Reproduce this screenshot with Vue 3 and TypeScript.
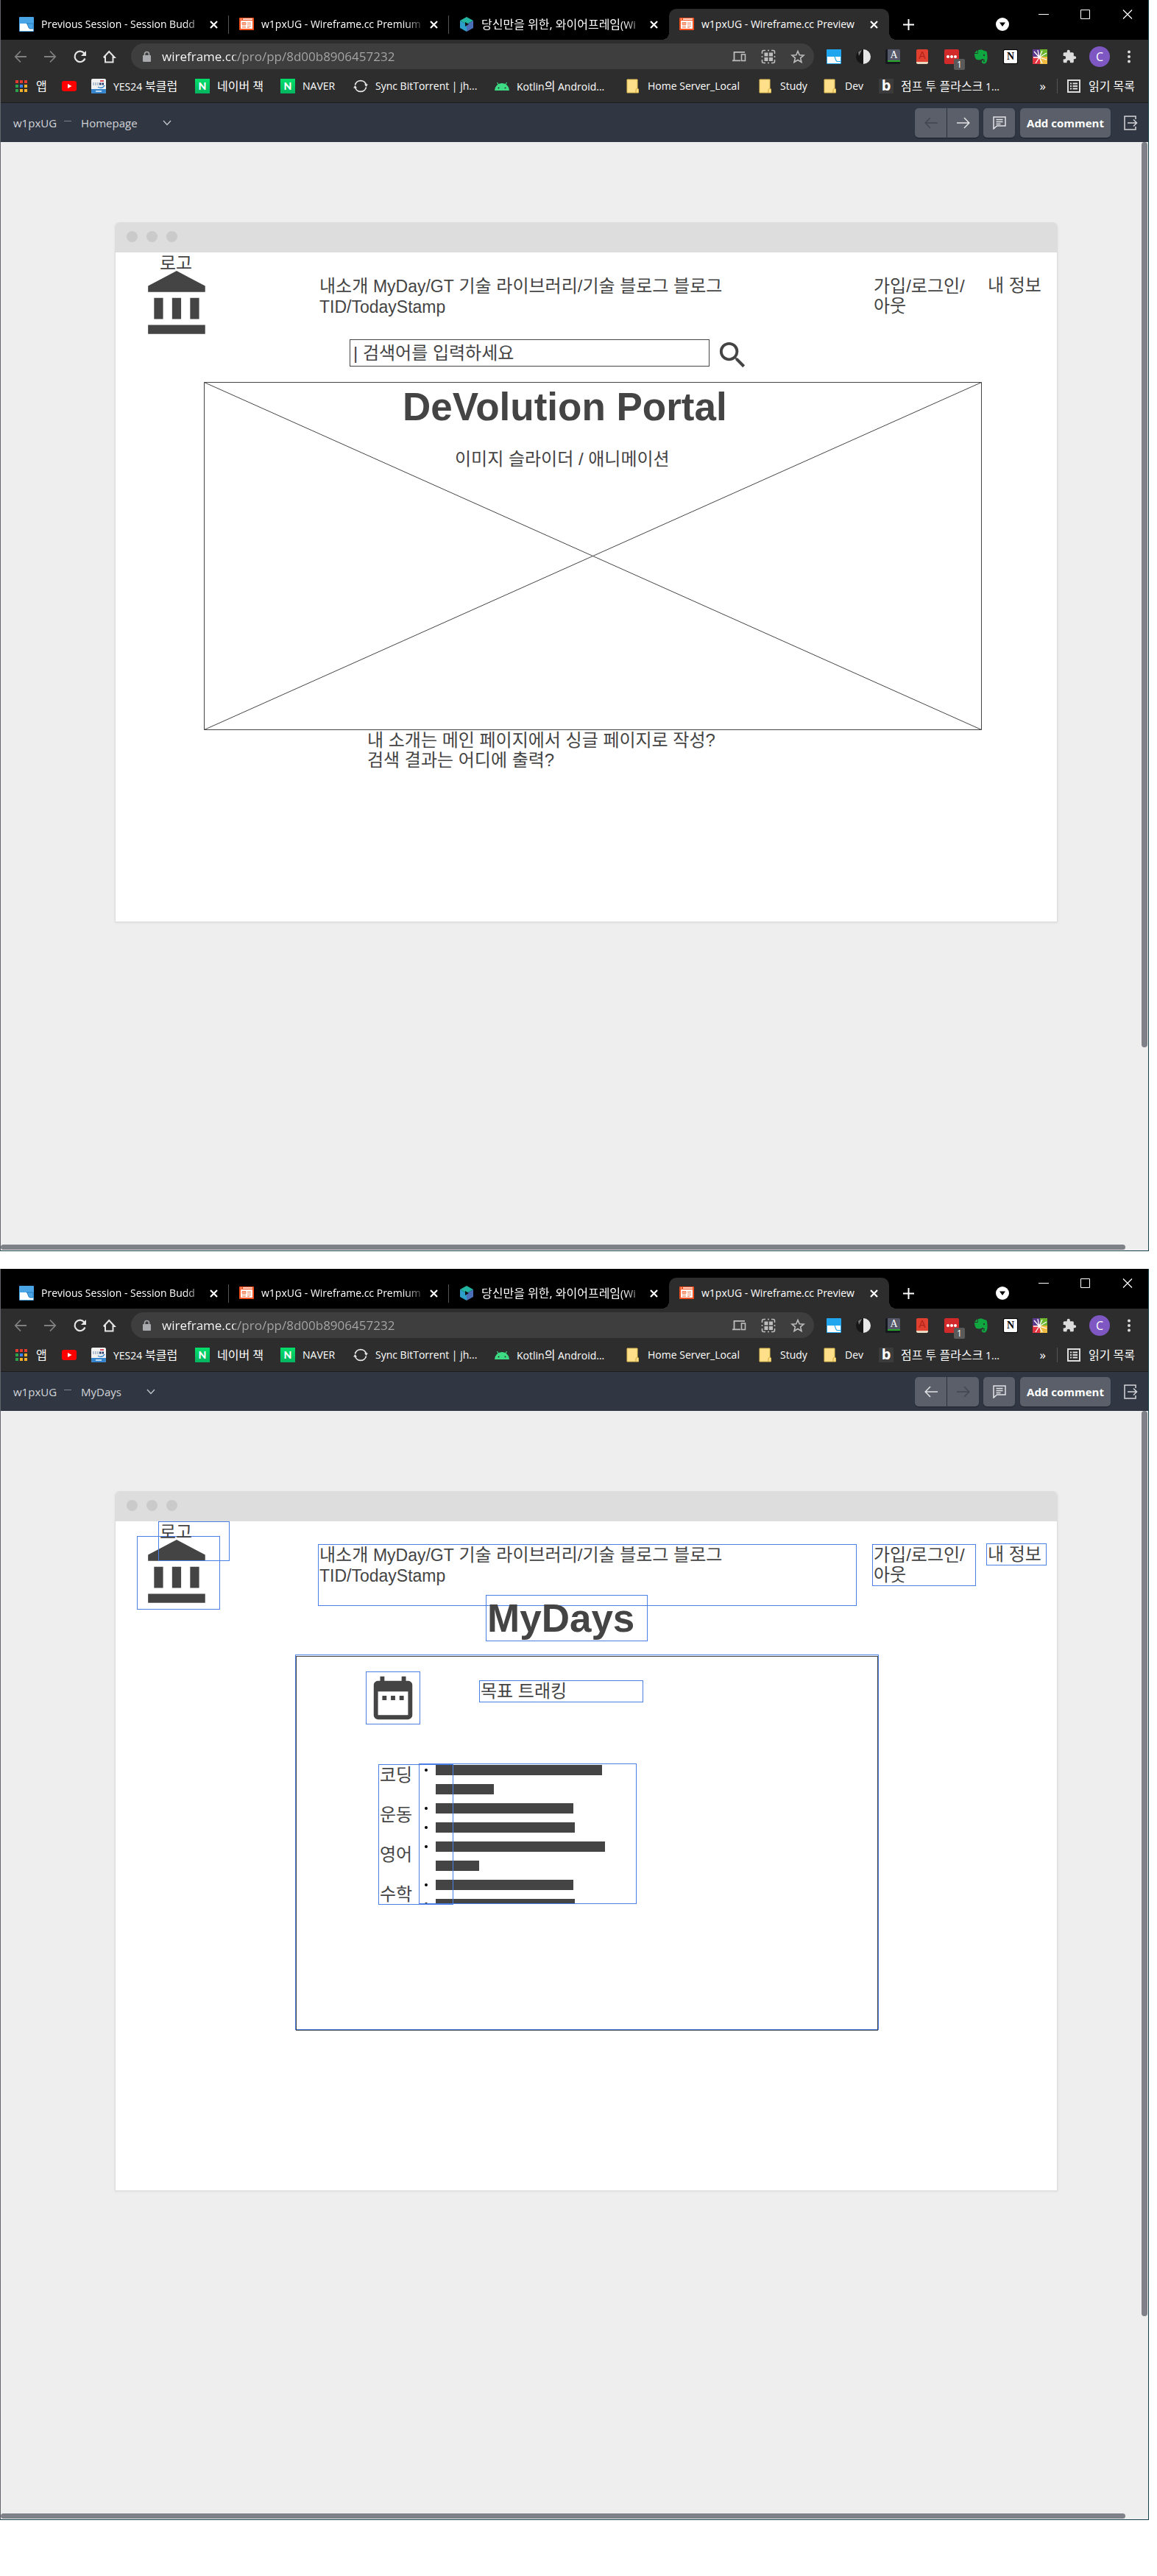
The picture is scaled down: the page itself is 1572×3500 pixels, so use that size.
<script setup lang="ts">
interface BrowserWindow {
  id: string
  page: string
  canGoBack: boolean
  canGoForward: boolean
  selected: boolean
}

interface Tab {
  icon: 'session' | 'wireframe' | 'hexagon'
  title: string
  active?: boolean
}

interface Bookmark {
  icon: 'apps' | 'youtube' | 'yes24' | 'naver' | 'sync' | 'android' | 'folder' | 'blog'
  label: string
}

interface Run {
  text: string
  hangul: boolean
}

const windows: BrowserWindow[] = [
  { id: 'home', page: 'Homepage', canGoBack: false, canGoForward: true, selected: false },
  { id: 'mydays', page: 'MyDays', canGoBack: true, canGoForward: false, selected: true },
]

const tabs: Tab[] = [
  { icon: 'session', title: 'Previous Session - Session Budd' },
  { icon: 'wireframe', title: 'w1pxUG - Wireframe.cc Premium' },
  { icon: 'hexagon', title: '당신만을 위한, 와이어프레임(Wi' },
  { icon: 'wireframe', title: 'w1pxUG - Wireframe.cc Preview', active: true },
]

const bookmarks: Bookmark[] = [
  { icon: 'apps', label: '앱' },
  { icon: 'youtube', label: '' },
  { icon: 'yes24', label: 'YES24 북클럽' },
  { icon: 'naver', label: '네이버 책' },
  { icon: 'naver', label: 'NAVER' },
  { icon: 'sync', label: 'Sync BitTorrent | jh...' },
  { icon: 'android', label: 'Kotlin의 Android...' },
  { icon: 'folder', label: 'Home Server_Local' },
  { icon: 'folder', label: 'Study' },
  { icon: 'folder', label: 'Dev' },
  { icon: 'blog', label: '점프 투 플라스크 1...' },
]

const appColors = ['#e33b2e', '#e33b2e', '#e33b2e', '#2ba24c', '#3b82f0', '#f4b02a', '#2ba24c', '#f4b02a', '#f4b02a']

const goals: number[][] = [[226, 79], [187], [189], [230, 59], [187], [189]]

// Hangul is set one step larger than Latin, so labels are split by script.
function runs(text: string): Run[] {
  const parts = text.match(/[가-힣]+(?:[ ,]+[가-힣]+)*|[^가-힣]+/g) ?? []
  return parts.map((part) => ({ text: part, hangul: /[가-힣]/.test(part) }))
}
</script>

<template>
  <main class="page">
    <section v-for="win in windows" :key="win.id" class="window">
      <header class="tabstrip">
        <div v-for="(tab, i) in tabs" :key="i" class="tab" :class="{ active: tab.active, divided: i < 2 }">
          <svg v-if="tab.icon === 'session'" class="fav" viewBox="0 0 20 20">
            <rect width="20" height="20" rx="1" fill="#4aa5e6" />
            <path d="M1 9h9c2 0 2 7 5 7h4v3H1z" fill="#fff" />
            <path d="M10 9h9v7h-4c-3 0-3-7-5-7z" fill="#4aa5e6" stroke="#2a7fc0" stroke-width="1" />
          </svg>
          <svg v-else-if="tab.icon === 'wireframe'" class="fav" viewBox="0 0 20 20">
            <rect y="1" width="20" height="17" rx="1" fill="#f4511e" />
            <path d="M2 3h1M5 3h13" stroke="#fff" stroke-width="1.4" />
            <rect x="2" y="5" width="16" height="11" fill="#fff" />
            <path d="M4 7.500h5v3H4zM11 8h5M11 10h5M4 12.500h5M4 14.500h5M11 12.500h5M11 14.500h3" fill="#f9a88c" stroke="#f58a66" />
          </svg>
          <svg v-else class="fav" viewBox="0 0 20 20">
            <path d="M10 0l9 5-9 5-9-5z" fill="#23b5a0" />
            <path d="M1 5l9 5v10l-9-5z" fill="#2d9fc9" />
            <path d="M19 5l-9 5v10l9-5z" fill="#4a6fb8" />
            <path d="M8 7l5 3-5 3z" fill="#111" />
          </svg>
          <span class="tab-title"><span v-for="(run, r) in runs(tab.title)" :key="r" :class="{ hangul: run.hangul }">{{ run.text }}</span></span>
          <button class="plain" type="button" aria-label="탭 닫기">
            <svg class="x" viewBox="0 0 11 11"><path d="M1 1l9 9M10 1l-9 9" stroke="#fff" stroke-width="2.200" /></svg>
          </button>
        </div>
        <button class="plain new-tab" type="button" aria-label="새 탭">
          <svg viewBox="0 0 15 15" width="15" height="15"><path d="M7.500 0v15M0 7.500h15" stroke="#fff" stroke-width="2" /></svg>
        </button>
        <button class="plain tab-search" type="button" aria-label="탭 검색">
          <svg viewBox="0 0 18 18" width="18" height="18"><circle cx="9" cy="9" r="9" fill="#fff" /><path d="M5 6.500h8L9 12z" fill="#000" /></svg>
        </button>
        <div class="controls">
          <button class="plain" type="button" aria-label="최소화"><svg viewBox="0 0 14 14"><path d="M0 7.500h14" stroke="#fff" /></svg></button>
          <button class="plain" type="button" aria-label="최대화"><svg viewBox="0 0 14 14"><path d="M.5 1.500h12v12H.5z" fill="none" stroke="#fff" /></svg></button>
          <button class="plain" type="button" aria-label="닫기"><svg viewBox="0 0 14 14"><path d="M1 1.500l12 12M13 1.500l-12 12" stroke="#fff" stroke-width="1.200" /></svg></button>
        </div>
      </header>

      <div class="toolbar">
        <button class="plain" type="button" aria-label="뒤로">
          <svg viewBox="0 0 20 20"><path d="M18 10H3M10 2.500L2.800 10l7.200 7.500" fill="none" stroke="#808080" stroke-width="1.800" /></svg>
        </button>
        <button class="plain" type="button" aria-label="앞으로">
          <svg viewBox="0 0 20 20"><path d="M2 10h15M10 2.500l7.200 7.500-7.200 7.500" fill="none" stroke="#808080" stroke-width="1.800" /></svg>
        </button>
        <button class="plain" type="button" aria-label="새로고침">
          <svg viewBox="0 0 20 20"><path d="M17.500 12.500A7.200 7.200 0 1 1 16.500 5.500" fill="none" stroke="#e4e4e4" stroke-width="2.200" /><path d="M19 2v7h-7z" fill="#e4e4e4" /></svg>
        </button>
        <button class="plain" type="button" aria-label="홈">
          <svg viewBox="0 0 20 20"><path d="M5 9.500V17.500h10.500V9.500M2.800 11L10.200 3l7.500 8h-2M2.800 11H5" fill="none" stroke="#e4e4e4" stroke-width="2" /></svg>
        </button>
        <div class="address">
          <svg class="lock" viewBox="0 0 16 16"><rect x="3" y="6" width="11" height="9" rx="1" fill="#a9abae" /><path d="M5.500 6.500V4.500a3 3 0 0 1 6 0v2" fill="none" stroke="#a9abae" stroke-width="1.600" /></svg>
          <input class="url" type="text" aria-label="주소" value="wireframe.cc/pro/pp/8d00b8906457232" />
          <div class="address-icons">
            <svg viewBox="0 0 20 20"><path d="M18 3.800H3.500V15M1 15.300h11" fill="none" stroke="#bdbdbd" stroke-width="1.800" /><rect x="13.500" y="7" width="5" height="8.500" fill="none" stroke="#bdbdbd" stroke-width="1.600" /></svg>
            <svg viewBox="0 0 20 20"><path d="M1.500 6V3.500a2 2 0 0 1 2-2H6M14 1.500h2.500a2 2 0 0 1 2 2V6M18.500 14v2.500a2 2 0 0 1-2 2H14M6 18.500H3.500a2 2 0 0 1-2-2V14M9 1.500h2M9 18.500h2M1.500 9v2M18.500 9v2" fill="none" stroke="#bdbdbd" stroke-width="1.600" /><path d="M4.500 4.500h5v5h-5zM11 4.500h5v5h-5zM4.500 11h5v5h-5zM11 11h5v5h-5z" fill="#bdbdbd" /></svg>
            <svg viewBox="0 0 20 20"><path d="M10 2.500l2.200 5.200 5.800.5-4.400 3.700 1.400 5.600-5-3-5 3 1.400-5.600L2 8.200l5.800-.5z" fill="none" stroke="#bdbdbd" stroke-width="1.600" /></svg>
          </div>
        </div>
        <div class="extensions">
          <svg viewBox="0 0 20 20"><rect width="20" height="20" rx="1" fill="#1fa6ee" /><path d="M1 10h10c1 0 1 7 4 7h4v2H1z" fill="#fff" /><path d="M11 10h8v6.500h-4c-3 0-3-6-4-6.500z" fill="#fff" /><path d="M11 10c1 1 1 6.500 4 6.500h4" fill="none" stroke="#1fa6ee" stroke-width="1.200" /></svg>
          <svg viewBox="0 0 20 20"><path d="M10 0a10 10 0 0 0 0 20z" fill="#161616" /><path d="M3 4a9 9 0 0 1 5-3L4 9z" fill="#777" /><path d="M10 0a10 10 0 0 1 0 20z" fill="#e6e6e6" /></svg>
          <span class="glyph dict">A</span>
          <span class="glyph book">A</span>
          <span class="glyph dots"><i></i><i></i><i></i><b>1</b></span>
          <svg viewBox="0 0 20 20"><path d="M6 1c3-1 7-.5 8 1 3 0 4 1 4 3 1 5 1 12-2 14-3 1.500-6 0-5-3 .6-1.500 3-1.500 4-.500-2-.2-2.500.7-2 1.500 1 .8 2-.2 2-1.500-.2-2-2.500-2.500-4-2.500-.5 2-5 1.500-7 1C2 13 1 9 1 6h4.500z" fill="#10a640" /><path d="M1 5l4-4v4z" fill="#10a640" /><ellipse cx="14" cy="8" rx="1" ry="1.300" fill="#2d2d2d" /></svg>
          <span class="glyph notion">N</span>
          <svg viewBox="0 0 20 20"><rect width="10" height="10" fill="#5b3a8e" /><rect x="10" width="10" height="10" fill="#6cb62e" /><rect y="10" width="10" height="10" fill="#e23440" /><rect x="10" y="10" width="10" height="10" fill="#f0bd42" /><path d="M9 11L2 3M9 11L7 1M9 11l4-9M9 11l10-6M9 11l10 3M9 11l4 8M9 11l-5 8M9 11H1" stroke="#fff" stroke-width="1.300" /></svg>
          <svg viewBox="0 0 24 24"><path fill="#dcdcdc" d="M20.500 11H19V7c0-1.100-.9-2-2-2h-4V3.500a2.500 2.500 0 0 0-5 0V5H4c-1.100 0-2 .9-2 2v3.800h1.500a2.700 2.700 0 0 1 0 5.400H2V20c0 1.100.9 2 2 2h3.800v-1.500a2.700 2.700 0 0 1 5.400 0V22H17c1.100 0 2-.9 2-2v-4h1.500a2.500 2.500 0 0 0 0-5z" /></svg>
        </div>
        <button class="plain avatar" type="button">C</button>
        <button class="plain" type="button" aria-label="메뉴">
          <svg viewBox="0 0 20 20"><circle cx="10" cy="3.500" r="2" fill="#dcdcdc" /><circle cx="10" cy="10" r="2" fill="#dcdcdc" /><circle cx="10" cy="16.500" r="2" fill="#dcdcdc" /></svg>
        </button>
      </div>

      <nav class="bookmarks" aria-label="북마크">
        <a v-for="(mark, i) in bookmarks" :key="i" href="#" class="bookmark">
          <svg v-if="mark.icon === 'apps'" viewBox="0 0 20 20" class="apps">
            <rect v-for="(color, n) in appColors" :key="n" :x="2 + (n % 3) * 6" :y="2 + Math.floor(n / 3) * 6" width="4" height="4" :fill="color" />
          </svg>
          <svg v-else-if="mark.icon === 'youtube'" viewBox="0 0 20 20"><rect y="3" width="20" height="14" rx="3" fill="#f00" /><path d="M8 7l5.500 3L8 13z" fill="#fff" /></svg>
          <svg v-else-if="mark.icon === 'yes24'" viewBox="0 0 20 20"><rect width="20" height="20" rx="2" fill="#f1f1f1" /><path d="M0 14h20v4a2 2 0 0 1-2 2H2a2 2 0 0 1-2-2z" fill="#3684cc" /><path d="M2 6h8M2 8h8" stroke="#9bb0c4" stroke-width="1.500" stroke-dasharray="2 1" /><path d="M11 7h6" stroke="#223a6b" stroke-width="3" stroke-dasharray="2.500 1" /><path d="M12 3h5" stroke="#dc5060" stroke-width="2" /><path d="M9 11c3 2 7 2 9-2" fill="none" stroke="#3684cc" stroke-width="1.500" /><path d="M6 17h8" stroke="#bcd9f2" stroke-width="2" /></svg>
          <span v-else-if="mark.icon === 'naver'" class="naver">N</span>
          <svg v-else-if="mark.icon === 'sync'" viewBox="0 0 20 20"><path d="M2.500 8.500a7.700 7.700 0 0 1 15 0M17.500 11.500a7.700 7.700 0 0 1-15 0" fill="none" stroke="#e6e6e6" stroke-width="1.700" /><path d="M15 7.500h5l-2.500 3.500zM0 12.500h5L2.500 9z" fill="#e6e6e6" /></svg>
          <svg v-else-if="mark.icon === 'android'" viewBox="0 0 20 20"><path d="M0 16a10 10 0 0 1 20 0z" fill="#3ddc84" /><path d="M5.500 8.500L3.500 5M14.500 8.500l2-3.500" stroke="#3ddc84" stroke-width="1.200" /><circle cx="5.500" cy="12.500" r="1" fill="#2d2d2d" /><circle cx="14.500" cy="12.500" r="1" fill="#2d2d2d" /></svg>
          <svg v-else-if="mark.icon === 'folder'" viewBox="0 0 20 20"><path d="M2 1h14v12l1.500 1v5H2z" fill="#ffe08a" stroke="#e2bd52" /><path d="M14 19v-4.500L16 13" fill="none" stroke="#d0a53a" /></svg>
          <span v-else class="blog">b</span>
          <span v-if="mark.label" class="mark-label"><span v-for="(run, r) in runs(mark.label)" :key="r" :class="{ hangul: run.hangul }">{{ run.text }}</span></span>
        </a>
        <button class="plain more" type="button">»</button>
        <a href="#" class="bookmark reading">
          <svg viewBox="0 0 20 20"><rect x="2" y="2" width="16" height="16" fill="none" stroke="#dcdcdc" stroke-width="2" /><path d="M5 6.500h2M8.500 6.500H15M5 10h2M8.500 10H15M5 13.500h2M8.500 13.500H15" stroke="#dcdcdc" stroke-width="1.800" /></svg>
          <span class="mark-label hangul">읽기 목록</span>
        </a>
      </nav>

      <div class="appbar">
        <span class="project">w1pxUG</span>
        <span class="dash"></span>
        <label class="picker">
          <select aria-label="페이지"><option>{{ win.page }}</option></select>
          <svg viewBox="0 0 12 8" width="12" height="8"><path d="M1 1l5 5.500L11 1" fill="none" stroke="#c4c7cc" stroke-width="1.300" /></svg>
        </label>
        <div class="pager">
          <button class="tool" type="button" :disabled="!win.canGoBack" aria-label="이전">
            <svg viewBox="0 0 18 18"><path d="M18 9H1.500M8 2L1.200 9 8 16" /></svg>
          </button>
          <button class="tool" type="button" :disabled="!win.canGoForward" aria-label="다음">
            <svg viewBox="0 0 18 18"><path d="M0 9h16.500M10 2l6.800 7-6.800 7" /></svg>
          </button>
        </div>
        <button class="tool comments" type="button" aria-label="댓글">
          <svg viewBox="0 0 18 18"><path d="M1 17V1h16v12H5.500zM4.500 4.500h9M4.500 7.500h9M4.500 10.500h6" /></svg>
        </button>
        <button class="tool add" type="button">Add comment</button>
        <button class="plain" type="button" aria-label="나가기">
          <svg viewBox="0 0 20 20" class="exit"><path d="M17 5V1H2v18h15v-4M6 10h12M14 5.500l4.500 4.500-4.500 4.500" fill="none" stroke="#d3d5d9" stroke-width="1.500" /></svg>
        </button>
      </div>

      <div class="stage">
        <article class="frame">
          <div class="frame-bar"><i></i><i></i><i></i></div>
          <div class="canvas" :class="{ selected: win.selected }">
            <div class="item bank">
              <svg viewBox="0 0 24 24" width="98" height="98"><path d="M4 10v7h3v-7H4zm6 0v7h3v-7h-3zM2 22h19v-3H2v3zm14-12v7h3v-7h-3zm-4.500-9L2 6v2h19V6l-9.500-5z" /></svg>
            </div>
            <p class="item logo">로고</p>
            <p class="item menu">내소개 <span class="latin">MyDay/GT</span> 기술 라이브러리/기술 블로그 블로그<br /><span class="latin">TID/TodayStamp</span></p>
            <p class="item login">가입/로그인/<br />아웃</p>
            <p class="item info">내 정보</p>

            <template v-if="win.id === 'home'">
              <input class="search" type="text" aria-label="검색" value="| 검색어를 입력하세요" />
              <svg class="item glass" viewBox="0 0 24 24"><path d="M15.500 14h-.79l-.28-.27A6.470 6.470 0 0 0 16 9.500 6.500 6.500 0 1 0 9.500 16c1.610 0 3.090-.59 4.230-1.570l.27.28v.79l5 4.990L20.490 19l-4.990-5zm-6 0C7.010 14 5 11.990 5 9.500S7.010 5 9.500 5 14 7.010 14 9.500 11.990 14 9.500 14z" /></svg>
              <svg class="item slider" viewBox="0 0 1057 473" preserveAspectRatio="none"><path d="M.5.5h1056v472H.5zM.5.5l1056 472M1056.500.5L.5 472.500" /></svg>
              <h1 class="item portal">DeVolution Portal</h1>
              <p class="item caption">이미지 슬라이더 / 애니메이션</p>
              <p class="item note">내 소개는 메인 페이지에서 싱글 페이지로 작성?<br />검색 결과는 어디에 출력?</p>
            </template>

            <template v-else>
              <h1 class="item days">MyDays</h1>
              <div class="item panel"></div>
              <div class="item calendar">
                <svg viewBox="0 0 24 24" width="70" height="70"><path d="M9 11H7v2h2v-2zm4 0h-2v2h2v-2zm4 0h-2v2h2v-2zm2-7h-1V2h-2v2H8V2H6v2H5c-1.110 0-1.990.9-1.990 2L3 20c0 1.100.89 2 2 2h14c1.100 0 2-.9 2-2V6c0-1.100-.9-2-2-2zm0 16H5V9h14v11z" /></svg>
              </div>
              <p class="item tracking">목표 트래킹</p>
              <ul class="item goals">
                <li v-for="(goal, i) in goals" :key="i">
                  <span v-for="(bar, n) in goal" :key="n" :style="{ width: bar + 'px' }"></span>
                </li>
              </ul>
              <p class="item subjects">코딩<br /><br />운동<br /><br />영어<br /><br />수학</p>
            </template>
          </div>
        </article>
        <div class="scroll-y"></div>
        <div class="scroll-x"></div>
      </div>
    </section>
  </main>
</template>

<style>
body {
  margin: 0;
  background: #fff;
}
</style>

<style scoped>
* {
  box-sizing: border-box;
}
.page {
  display: flex;
  flex-direction: column;
  gap: 24px;
  padding: 0 11px 76px 0;
  font-family: "Open Sans", "Noto Sans CJK KR", sans-serif;
  font-size: 14px;
  color: #fff;
}
.window {
  border: solid #173f4a;
  border-width: 0 1px 1px 0;
  border-left: 1px solid #63666b;
}
svg {
  display: block;
  flex: none;
}
p,
h1,
ul {
  margin: 0;
  padding: 0;
}
a {
  color: inherit;
  text-decoration: none;
}
.plain {
  display: block;
  flex: none;
  margin: 0;
  padding: 0;
  border: 0;
  background: none;
  color: inherit;
  font: inherit;
}
.hangul {
  font-size: 16px;
}

/* Tab strip */
.tabstrip {
  display: flex;
  align-items: center;
  height: 54px;
  padding: 12px 21px 0 11px;
  background: #000;
}
.tab {
  position: relative;
  display: flex;
  flex: 0 1 299px;
  align-items: center;
  gap: 10px;
  min-width: 0;
  height: 42px;
  padding: 0 15px 0 14px;
}
.tab.divided::after {
  position: absolute;
  right: 0;
  top: 9px;
  width: 1px;
  height: 25px;
  background: #555;
  content: "";
}
.tab.active {
  border-radius: 10px 10px 0 0;
  background: #2d2d2d;
}
.tab.active::before,
.tab.active::after {
  position: absolute;
  bottom: 0;
  width: 10px;
  height: 10px;
  content: "";
}
.tab.active::before {
  left: -10px;
  background: radial-gradient(circle at 0 0, transparent 10px, #2d2d2d 10px);
}
.tab.active::after {
  right: -10px;
  background: radial-gradient(circle at 100% 0, transparent 10px, #2d2d2d 10px);
}
.fav {
  width: 20px;
  height: 20px;
}
.tab-title {
  flex: 1;
  overflow: hidden;
  margin-right: -4px;
  white-space: nowrap;
  line-height: 24px;
  mask-image: linear-gradient(to right, #000 calc(100% - 28px), transparent);
}
.tab.active .tab-title {
  mask-image: none;
}
.x {
  width: 11px;
  height: 11px;
}
.new-tab {
  margin-left: 19px;
}
.tab-search {
  margin-left: auto;
}
.controls {
  display: flex;
  align-self: flex-start;
  gap: 43px;
  margin-left: 40px;
}
.controls svg {
  width: 14px;
  height: 14px;
}

/* Toolbar */
.toolbar {
  display: flex;
  align-items: center;
  gap: 20px;
  height: 45px;
  padding: 0 16px 0 17px;
  background: #2d2d2d;
}
.toolbar svg {
  width: 20px;
  height: 20px;
}
.address {
  display: flex;
  flex: 1;
  align-items: center;
  gap: 13px;
  min-width: 0;
  height: 35px;
  padding: 0 12px 0 13px;
  border-radius: 18px;
  background: #3e3e3e;
}
.address .lock {
  width: 16px;
  height: 16px;
}
.url {
  flex: 1;
  min-width: 0;
  padding: 0;
  border: 0;
  outline: 0;
  background: linear-gradient(to right, #fff 98px, #a8a8a8 98px);
  background-clip: text;
  color: transparent;
  font: inherit;
  font-size: 17px;
}
.address-icons,
.extensions {
  display: flex;
  gap: 20px;
}
.extensions {
  margin-left: -3px;
}
.glyph {
  position: relative;
  display: flex;
  justify-content: center;
  align-items: center;
  width: 20px;
  height: 20px;
  border-radius: 2px;
  font-family: "Liberation Serif", serif;
  font-size: 14px;
  line-height: 20px;
}
.dict {
  border-left: 3px solid #16181f;
  border-bottom: 3px solid #16181f;
  background: #555868;
  box-shadow: inset 0 -2px #2aa82a;
}
.book {
  width: 16px;
  margin: 0 2px;
  border-bottom: 3px solid #e8d9c0;
  background: #e0402f;
  color: #b02318;
  font-family: "Liberation Sans", sans-serif;
}
.dots {
  gap: 1px;
  background: #d22a2a;
}
.dots i {
  width: 4px;
  height: 4px;
  border-radius: 2px;
  background: #fff;
}
.dots b {
  position: absolute;
  left: 13px;
  top: 13px;
  width: 15px;
  height: 15px;
  border-radius: 2px;
  background: #5a5a5a;
  font: 12px/15px "Open Sans", sans-serif;
  text-align: center;
}
.notion {
  border: 2px solid #000;
  outline: 1px solid #eee;
  outline-offset: -2px;
  background: #fff;
  color: #000;
  font-weight: 700;
}
.avatar {
  width: 28px;
  height: 28px;
  margin: 0 -4px 0 -3px;
  border-radius: 50%;
  background: #7e57c2;
  font-size: 16px;
  line-height: 28px;
  text-align: center;
}

/* Bookmarks bar */
.bookmarks {
  display: grid;
  grid-template-columns: 63px 40px 141px 116px 99px 192px 178px 180px 88px 76px 200px 1fr auto;
  align-items: center;
  height: 41px;
  padding: 0 18px 4px 18px;
  border-bottom: 1px solid #1c1c1e;
  background: #2d2d2d;
}
.bookmark {
  display: flex;
  align-items: center;
  gap: 10px;
  white-space: nowrap;
}
.bookmark svg {
  width: 20px;
  height: 20px;
}
.mark-label {
  line-height: 20px;
}
.bookmark:nth-child(n + 2) {
  margin-left: 2px;
}
.naver,
.blog {
  width: 20px;
  height: 20px;
  background: linear-gradient(#03e06b, #04b45f);
  font: 900 14px/20px Lato, sans-serif;
  text-align: center;
}
.blog {
  background: #3b3b3b;
  font: 700 20px/18px "Open Sans", sans-serif;
}
.more {
  justify-self: end;
  margin-right: 13px;
  font-size: 17px;
  line-height: 20px;
}
.reading {
  padding-left: 12px;
  border-left: 1px solid #555;
}

/* Application bar */
.appbar {
  display: flex;
  align-items: center;
  height: 53px;
  padding: 0 14px 0 17px;
  background: #303642;
  color: #d3d5d9;
  font-size: 15px;
}
.dash {
  width: 10px;
  height: 1px;
  margin: 0 13px 4px 10px;
  background: #80858e;
}
.picker {
  display: flex;
  align-items: center;
  gap: 34px;
}
.picker select {
  margin: 0;
  padding: 0;
  border: 0;
  outline: 0;
  appearance: none;
  background: none;
  color: inherit;
  font: inherit;
}
.pager {
  display: flex;
  gap: 1px;
  margin-left: auto;
}
.tool {
  display: flex;
  justify-content: center;
  align-items: center;
  width: 43px;
  height: 40px;
  padding: 0;
  border: 0;
  border-radius: 5px;
  background: #5a5f69;
  box-shadow: 0 1px 1px #1d2129;
  color: #fff;
  font: inherit;
}
.tool svg {
  width: 18px;
  height: 18px;
  fill: none;
  stroke: #e3e4e6;
  stroke-width: 1.500;
}
.tool:disabled svg {
  stroke: #41464f;
}
.pager .tool:first-child {
  border-radius: 5px 0 0 5px;
}
.pager .tool:last-child {
  border-radius: 0 5px 5px 0;
}
.comments {
  margin: 0 7px 0 6px;
}
.add {
  width: 123px;
  margin-right: 17px;
  font-weight: 700;
}
.exit {
  width: 20px;
  height: 20px;
}

/* Stage with the drawing */
.stage {
  position: relative;
  padding: 109px 123px 446px 155px;
  background: #eee;
  color: #444;
}
.frame {
  overflow: hidden;
  border: solid #ddd;
  border-width: 0 1px 1px;
  border-radius: 6px 6px 0 0;
  background: #fff;
  box-shadow: 0 1px 3px #ddd;
}
.frame-bar {
  display: flex;
  align-items: center;
  gap: 12px;
  height: 41px;
  padding: 0 15px 2px;
  background: #ddd;
}
.frame-bar i {
  width: 15px;
  height: 15px;
  border-radius: 50%;
  background: #cacaca;
}
.canvas {
  position: relative;
  height: 909px;
  font-family: "Liberation Sans", "Noto Sans CJK KR", sans-serif;
  font-size: 24px;
  line-height: 27px;
}
.item {
  position: absolute;
  padding: 0 1px;
  border: 1px solid transparent;
  fill: #444;
}
.selected .item {
  border-color: #4a7fe8;
}
.latin {
  font-size: 23px;
}
.bank {
  left: 29px;
  top: 20px;
  width: 113px;
  height: 100px;
  padding-left: 6px;
}
.logo {
  left: 58px;
  top: 0;
  width: 97px;
  height: 54px;
}
.menu {
  left: 275px;
  top: 31px;
  width: 732px;
  height: 84px;
}
.login {
  left: 1028px;
  top: 31px;
  width: 141px;
  height: 57px;
}
.info {
  left: 1183px;
  top: 30px;
  width: 82px;
  height: 30px;
  white-space: nowrap;
}
.search {
  position: absolute;
  left: 318px;
  top: 118px;
  width: 489px;
  height: 37px;
  padding: 0 4px 4px;
  border: 1px solid #444;
  outline: 0;
  background: #fff;
  color: inherit;
  font: inherit;
}
.glass {
  left: 813px;
  top: 114px;
  width: 51px;
  height: 51px;
}
.slider {
  left: 120px;
  top: 176px;
  width: 1057px;
  height: 473px;
  padding: 0;
  border: 0;
  fill: none;
  stroke: #444;
}
.portal,
.days {
  font-size: 53px;
  line-height: 62px;
  white-space: nowrap;
}
.portal {
  left: 388px;
  top: 178px;
}
.caption {
  left: 459px;
  top: 266px;
}
.note {
  left: 340px;
  top: 648px;
}
.days {
  left: 503px;
  top: 100px;
  width: 220px;
  height: 63px;
}
.panel {
  left: 244px;
  top: 181px;
  width: 793px;
  height: 510px;
  padding: 1px 0 0;
}
.panel::after {
  display: block;
  height: 100%;
  border: 1px solid #444;
  content: "";
}
.calendar {
  left: 340px;
  top: 204px;
  width: 74px;
  height: 72px;
}
.tracking {
  left: 494px;
  top: 216px;
  width: 223px;
  height: 30px;
}
.subjects {
  left: 357px;
  top: 330px;
  width: 102px;
  height: 191px;
}
.goals {
  left: 412px;
  top: 329px;
  width: 296px;
  height: 191px;
  overflow: hidden;
  padding: 1px 0 0 22px;
  list-style: none;
}
.goals li {
  position: relative;
}
.goals li::before {
  position: absolute;
  left: -15px;
  top: 5px;
  width: 4px;
  height: 4px;
  border-radius: 2px;
  background: #000;
  content: "";
}
.goals span {
  display: block;
  height: 14px;
  margin-bottom: 12px;
  background: #444;
}
.scroll-y,
.scroll-x {
  position: absolute;
  border-radius: 4px;
  background: #7e8188;
}
.scroll-y {
  right: 1px;
  top: 0;
  bottom: 276px;
  width: 8px;
}
.scroll-x {
  left: 0;
  right: 31px;
  bottom: 1px;
  height: 7px;
}
</style>
